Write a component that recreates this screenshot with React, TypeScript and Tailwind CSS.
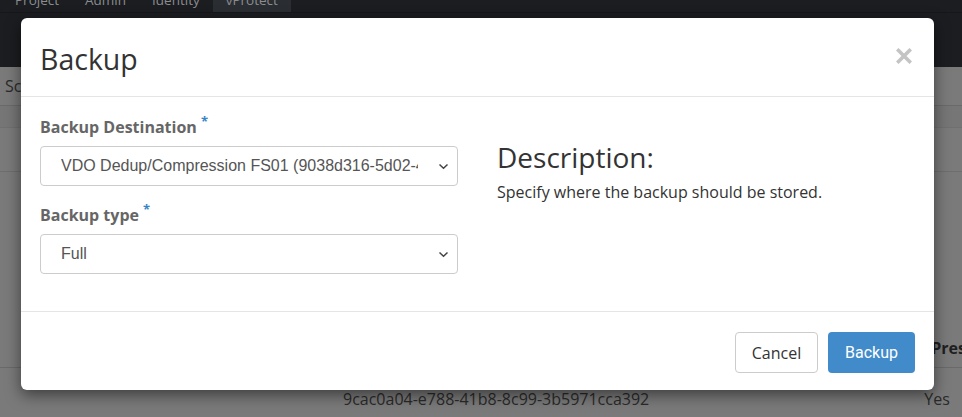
export default function App() {
  const tabs = ['Project', 'Admin', 'Identity', 'vProtect']

  return (
    <div className="relative w-[962px] h-[417px] overflow-hidden bg-[#7a7a7a] font-['Open_Sans',sans-serif]">
      {/* page underneath the backdrop */}
      <div className="h-[67px] bg-[#1b1d20]">
        <div className="flex h-[13px] pl-[2px] border-b border-[#15171a] overflow-hidden">
          {tabs.map((t) => (
            <div
              key={t}
              className={`px-[13px] text-[13.5px] leading-[14px] -mt-[8px] pt-[1px] text-[#8a8c8f] ${t === 'vProtect' ? 'bg-[#2a2d31]' : ''}`}
            >
              {t}
            </div>
          ))}
        </div>
      </div>
      <div className="h-[39px] flex items-center pl-[5px] text-[16px] text-[#2a2a2a] border-b border-[#6a6a6a]">
        Sc
      </div>
      <div className="h-[22px] bg-[#767676] border-b border-[#707070]" />
      <div className="h-[44px] border-b border-[#6e6e6e]" />
      <div className="h-[195px] flex items-end justify-end pb-[7px]">
        <span className="text-[16px] font-bold text-[#1f1f1f] -mr-[4px]">Pres</span>
      </div>
      <div className="border-t border-[#6a6a6a] flex pt-[19px] text-[16px] text-[#2a2a2a]">
        <span className="ml-[343px]">9cac0a04-e788-41b8-8c99-3b5971cca392</span>
        <span className="ml-[275px]">Yes</span>
      </div>

      {/* modal */}
      <div className="absolute left-[21px] top-[18px] w-[913px] rounded-[6px] bg-white shadow-[0_5px_15px_rgba(0,0,0,0.5)]">
        <div className="h-[79px] flex items-center justify-between pl-[19px] pr-[22px] border-b border-[#e5e5e5]">
          <h4 className="text-[28.5px] leading-[32px] text-[#333] pt-[4px]">Backup</h4>
          <svg width="16" height="16" viewBox="0 0 16 16" className="mb-[2px]">
            <path d="M2.5 2.5 L13.5 13.5 M13.5 2.5 L2.5 13.5" stroke="#c4c4c4" strokeWidth="3.6" strokeLinecap="square" />
          </svg>
        </div>

        <div className="flex pl-[19px] pr-[19px] pt-[20px] pb-[37px]">
          <div className="w-[418px]">
            <Label text="Backup Destination" />
            <Select value="VDO Dedup/Compression FS01 (9038d316-5d02-4c" />
            <div className="mt-[19px]">
              <Label text="Backup type" />
            </div>
            <Select value="Full" />
          </div>
          <div className="ml-[39px] pt-[25px]">
            <h3 className="text-[28px] leading-[30px] text-[#333]">Description:</h3>
            <p className="mt-[10px] text-[16px] leading-[20px] text-[#333]">
              Specify where the backup should be stored.
            </p>
          </div>
        </div>

        <div className="h-[79px] flex items-start justify-end gap-[10px] pt-[20px] pr-[19px] border-t border-[#e5e5e5]">
          <button className="h-[41px] w-[83px] rounded-[4px] border border-[#ccc] bg-white text-[16px] text-[#333]">
            Cancel
          </button>
          <button className="h-[41px] w-[87px] rounded-[4px] bg-[#428bca] text-[16px] text-white font-['Roboto',sans-serif]">
            Backup
          </button>
        </div>
      </div>
    </div>
  )
}

function Label({ text }: { text: string }) {
  return (
    <div className="h-[20px] mb-[9px] flex items-start text-[16px] leading-[20px] font-bold text-[#666]">
      {text}
      <span className="ml-[4px] -mt-[6px] text-[13px] text-[#3b83c6]">*</span>
    </div>
  )
}

function Select({ value }: { value: string }) {
  return (
    <div className="h-[40px] flex items-center rounded-[4px] border border-[#ccc] bg-white pl-[20px] pr-[8px]">
      <div className="flex-1 overflow-hidden whitespace-nowrap text-[16px] text-[#555] font-['Liberation_Sans',sans-serif] mr-[20px]">
        {value}
      </div>
      <svg width="11" height="7" viewBox="0 0 11 7">
        <path d="M1.5 1.5 L5.5 5.2 L9.5 1.5" fill="none" stroke="#444" strokeWidth="1.5" />
      </svg>
    </div>
  )
}
